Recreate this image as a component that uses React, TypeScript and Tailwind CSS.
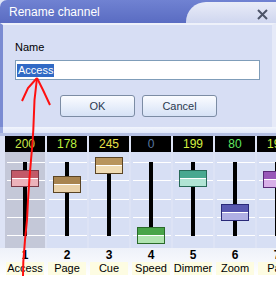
import React from "react";

type Channel = {
  num: number;
  label: string;
  value: number;
  valueColor: string;
  border: string;
  top: string;
  bottom: string;
  selected?: boolean;
};

const channels: Channel[] = [
  { num: 1, label: "Access", value: 200, valueColor: "#cce84a", border: "#7a3a48", top: "#c25a68", bottom: "#ecb2ba", selected: true },
  { num: 2, label: "Page", value: 178, valueColor: "#bef040", border: "#5a4424", top: "#a88450", bottom: "#ead2aa" },
  { num: 3, label: "Cue", value: 245, valueColor: "#e8e048", border: "#5a4424", top: "#b8945c", bottom: "#f0dcb4" },
  { num: 4, label: "Speed", value: 0, valueColor: "#5a7aa0", border: "#2a6a2a", top: "#48a448", bottom: "#b0e4b0" },
  { num: 5, label: "Dimmer", value: 199, valueColor: "#d6f040", border: "#286a58", top: "#48a890", bottom: "#b0e4d4" },
  { num: 6, label: "Zoom", value: 80, valueColor: "#62e862", border: "#2a2a78", top: "#5858b0", bottom: "#b0b0e4" },
  { num: 7, label: "Pan", value: 195, valueColor: "#d0f040", border: "#5a2a78", top: "#9858b8", bottom: "#d8b0e8" },
];

function CloseIcon() {
  return (
    <svg width="11" height="11" viewBox="0 0 11 11">
      <path d="M1 1 L10 10 M10 1 L1 10" stroke="#4c5468" strokeWidth="2" />
    </svg>
  );
}

function Fader({ ch }: { ch: Channel }) {
  const top = Math.round(75 - (ch.value * 73) / 255);
  return (
    <div className={`relative h-[96px] pt-[10px] ${ch.selected ? "bg-[#c4c8d8]" : "bg-[#d7dff4]"}`}>
      <div className="flex h-[74px] flex-col justify-between pl-[2px]">
        {[0, 1, 2, 3, 4].map((i) => (
          <div key={i} className="h-px bg-white" />
        ))}
      </div>
      <div className="absolute left-[18px] top-[10px] h-[74px] w-[4px] bg-black" />
      <div
        className="absolute left-[6px] flex h-[17px] w-[28px] flex-col border"
        style={{ top, borderColor: ch.border }}
      >
        <div className="h-[7px]" style={{ background: ch.top }} />
        <div className="h-px bg-white" />
        <div className="h-[7px]" style={{ background: ch.bottom }} />
      </div>
    </div>
  );
}

export default function App() {
  return (
    <div
      className="relative h-[288px] w-[276px] overflow-hidden bg-white text-[11px] text-black"
      style={{ fontFamily: '"Liberation Sans", Arial, sans-serif' }}
    >
      {/* dialog */}
      <div className="bg-[#dfe5f6]">
        <div className="flex h-[23px] rounded-tl-[7px] bg-gradient-to-b from-[#7082d2] to-[#5a6cc2]">
          <div className="flex flex-1 items-center pl-[9px] pt-[1px] text-[12px] text-white">Rename channel</div>
          <div className="mt-[2px] flex w-[90px] items-start justify-end rounded-tl-[20px] bg-gradient-to-b from-[#e9ecf8] to-[#cfd6ef] pr-[8px] pt-[7px]">
            <CloseIcon />
          </div>
        </div>
        <div className="border-l-[3px] border-r-[4px] border-t-[2px] border-l-[#7a8bd2] border-r-[#e6eaf8] border-t-[#eef1fa] bg-[#d7def4] pl-[12px] pt-[16px] pb-[10px]">
          <div className="h-[13px] leading-[13px]">Name</div>
          <div className="mt-[6px] flex h-[20px] w-[245px] items-center border border-[#7f9db9] bg-white pl-[1px]">
            <span className="bg-[#316ac5] px-[1px] leading-[13px] text-white">Access</span>
          </div>
          <div className="mt-[15px] ml-[45px] flex gap-[7px]">
            {["OK", "Cancel"].map((t) => (
              <button
                key={t}
                className="flex h-[22px] w-[75px] items-center justify-center rounded-[3px] border border-[#7c8ca4] bg-gradient-to-b from-[#fbfcff] to-[#d6e2f6] text-[#2a3a50]"
              >
                {t}
              </button>
            ))}
          </div>
        </div>
        <div className="h-[6px] border-l-[3px] border-l-[#9aa8de] bg-gradient-to-b from-[#f2f5fd] to-[#dfe6f8]" />
        <div className="h-[3px] bg-[#b4bfe2]" />
      </div>

      {/* channel strip */}
      <div className="flex gap-[2px] bg-[#dde3f5] pl-[5px]">
        {channels.map((ch) => (
          <div key={ch.num} className="w-[40px] shrink-0">
            <div
              className="flex h-[16px] items-center justify-center bg-black text-[12px]"
              style={{ color: ch.valueColor }}
            >
              {ch.value}
            </div>
            <Fader ch={ch} />
          </div>
        ))}
      </div>
      <div className="flex gap-[2px] bg-gradient-to-b from-[#eef1f9] to-white pl-[5px] pb-[1px]">
        {channels.map((ch) => (
          <div key={ch.num} className="flex w-[40px] shrink-0 flex-col items-center">
            <div className="h-[14px] text-[12px] font-bold leading-[14px]">{ch.num}</div>
            <div className="flex h-[13px] w-[38px] items-center justify-center bg-[#fdfce2] leading-[13px]">
              {ch.label}
            </div>
          </div>
        ))}
      </div>

      {/* red annotation arrow */}
      <svg className="pointer-events-none absolute left-0 top-0" width="276" height="288" viewBox="0 0 276 288">
        <polyline
          points="37,78 34.5,100 33.3,130 32.3,145 31,160 29.5,178 28,200 27,220 25,240 23.3,262 23,276"
          fill="none"
          stroke="#ff1010"
          strokeWidth="2"
        />
        <polyline points="22,101 28,88 37,78" fill="none" stroke="#ff1010" strokeWidth="2" />
        <polyline points="37,78 43,90 50,105" fill="none" stroke="#ff1010" strokeWidth="2" />
      </svg>
    </div>
  );
}
